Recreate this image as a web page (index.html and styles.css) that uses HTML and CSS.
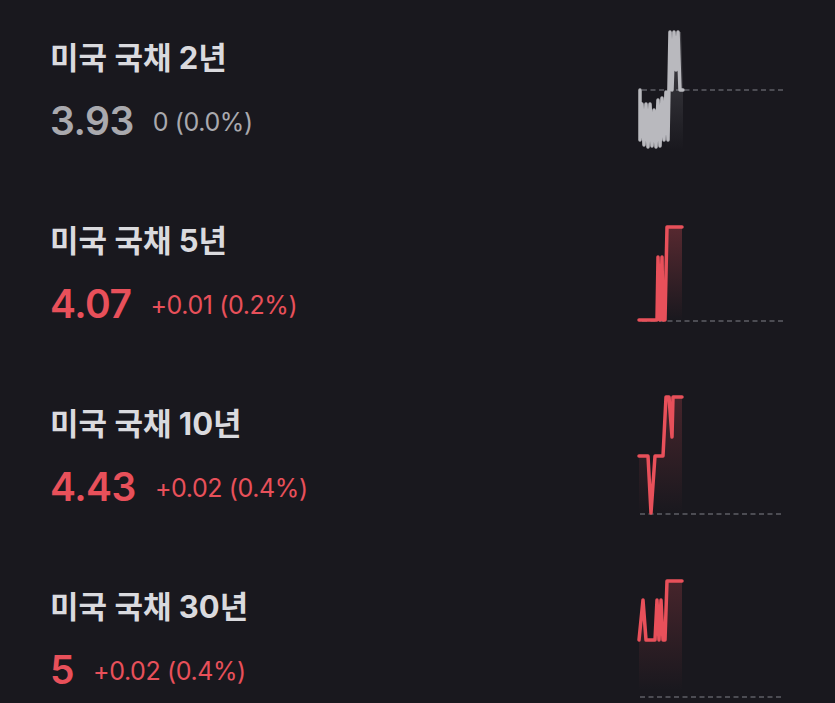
FILE: index.html
```html
<!DOCTYPE html>
<html lang="ko">
<head>
  <meta charset="UTF-8">
  <meta name="viewport" content="width=device-width, initial-scale=1.0">
  <title>미국 국채</title>
  <link rel="stylesheet" href="styles.css">
</head>
<body>
  <ul class="bond-list">
    <li class="bond-row">
      <div class="bond-info">
        <div class="bond-name">미국 국채 2년</div>
        <div class="bond-quote flat">
          <span class="bond-yield">3.93</span>
          <span class="bond-change">0 (0.0%)</span>
        </div>
      </div>
      <svg class="spark" width="160" height="183" viewBox="0 0 160 183">
        <defs>
          <linearGradient id="fillFlat" x1="0" y1="0" x2="0" y2="1">
            <stop offset="0" stop-color="#b9b9be" stop-opacity="0.28"/>
            <stop offset="1" stop-color="#b9b9be" stop-opacity="0"/>
          </linearGradient>
        </defs>
        <line class="base" x1="12" y1="90" x2="153" y2="90"/>
        <path class="area" fill="url(#fillFlat)" d="M38,90 L41,32 L44,32 L46,70 L48,32 L51,32 L53,90 L53,150 L36,150 Z"/>
        <path class="line flat" d="M10,90 L10,140 L12,104 L14,145 L16,104 L18,147 L20,104 L22,146 L24,110 L26,147 L28,100 L30,146 L32,98 L34,140 L36,92 L38,140 L40,32 L42,90 L44,32 L46,70 L48,32 L50,90 L53,90"/>
      </svg>
    </li>
    <li class="bond-row">
      <div class="bond-info">
        <div class="bond-name">미국 국채 5년</div>
        <div class="bond-quote up">
          <span class="bond-yield">4.07</span>
          <span class="bond-change">+0.01 (0.2%)</span>
        </div>
      </div>
      <svg class="spark" width="160" height="183" viewBox="0 0 160 183">
        <defs>
          <linearGradient id="fillUp2" x1="0" y1="0" x2="0" y2="1">
            <stop offset="0" stop-color="#e8505a" stop-opacity="0.3"/>
            <stop offset="1" stop-color="#e8505a" stop-opacity="0"/>
          </linearGradient>
        </defs>
        <line class="base" x1="12" y1="138" x2="153" y2="138"/>
        <path class="area" fill="url(#fillUp2)" d="M37,44 L52,44 L52,138 L37,138 Z"/>
        <path class="line up" d="M9,137 L27,137 L28,74 L30,137 L32,74 L33,137 L35,137 L37,44 L52,44"/>
      </svg>
    </li>
    <li class="bond-row">
      <div class="bond-info">
        <div class="bond-name">미국 국채 10년</div>
        <div class="bond-quote up">
          <span class="bond-yield">4.43</span>
          <span class="bond-change">+0.02 (0.4%)</span>
        </div>
      </div>
      <svg class="spark" width="160" height="183" viewBox="0 0 160 183">
        <defs>
          <linearGradient id="fillUp3" x1="0" y1="0" x2="0" y2="1">
            <stop offset="0" stop-color="#e8505a" stop-opacity="0.22"/>
            <stop offset="1" stop-color="#e8505a" stop-opacity="0"/>
          </linearGradient>
        </defs>
        <line class="base" x1="10" y1="148" x2="153" y2="148"/>
        <path class="area" fill="url(#fillUp3)" d="M9,90 L18,90 L21,147 L25,90 L33,90 L37,31 L52,31 L52,148 L9,148 Z"/>
        <path class="line up" d="M9,90 L18,90 L21,147 L25,90 L33,90 L36,31 L39,31 L42,71 L43,31 L52,31"/>
      </svg>
    </li>
    <li class="bond-row">
      <div class="bond-info">
        <div class="bond-name">미국 국채 30년</div>
        <div class="bond-quote up">
          <span class="bond-yield">5</span>
          <span class="bond-change">+0.02 (0.4%)</span>
        </div>
      </div>
      <svg class="spark" width="160" height="183" viewBox="0 0 160 183">
        <defs>
          <linearGradient id="fillUp4" x1="0" y1="0" x2="0" y2="1">
            <stop offset="0" stop-color="#e8505a" stop-opacity="0.22"/>
            <stop offset="1" stop-color="#e8505a" stop-opacity="0"/>
          </linearGradient>
        </defs>
        <line class="base" x1="10" y1="148" x2="153" y2="148"/>
        <path class="area" fill="url(#fillUp4)" d="M9,91 L13,51 L16,91 L25,91 L27,51 L29,91 L31,51 L33,91 L37,32 L52,32 L52,142 L9,142 Z"/>
        <path class="line up" d="M9,91 L13,51 L16,91 L25,91 L27,51 L29,91 L31,51 L33,91 L35,91 L37,32 L52,32"/>
      </svg>
    </li>
  </ul>
</body>
</html>
```

FILE: styles.css
```css
html,
body {
  margin: 0;
  height: 100%;
  background: #19181e;
  overflow: hidden;
}

.bond-list {
  list-style: none;
  margin: 0;
  padding: 0 0 0 50px;
  font-family: Inter, "Noto Sans CJK KR", sans-serif;
}

.bond-row {
  display: flex;
  height: 183px;
}

.bond-info {
  flex: 1;
}

.bond-name {
  margin-top: 40px;
  font-size: 31px;
  font-weight: 700;
  line-height: 36px;
  color: #dadade;
}

.bond-quote {
  display: flex;
  align-items: center;
  gap: 19px;
  margin-top: 23px;
}

.bond-yield {
  font-size: 39px;
  font-weight: 600;
  line-height: 44px;
  letter-spacing: -0.5px;
}

.bond-change {
  font-size: 25px;
  font-weight: 400;
  line-height: 30px;
  letter-spacing: -0.4px;
  padding-top: 2px;
}

.flat {
  color: #a9a9ae;
}

.up {
  color: #e8505a;
}

.spark {
  display: block;
  flex: none;
  margin-right: 45px;
}

.spark .base {
  stroke: #5e5e65;
  stroke-width: 1.5;
  stroke-dasharray: 5 3.5;
}

.spark .area {
  stroke: none;
}

.spark .line {
  fill: none;
  stroke-width: 3.5;
  stroke-linejoin: round;
  stroke-linecap: round;
}

.spark .line.flat {
  stroke: #b9b9be;
}

.spark .line.up {
  stroke: #e8505a;
}
```
